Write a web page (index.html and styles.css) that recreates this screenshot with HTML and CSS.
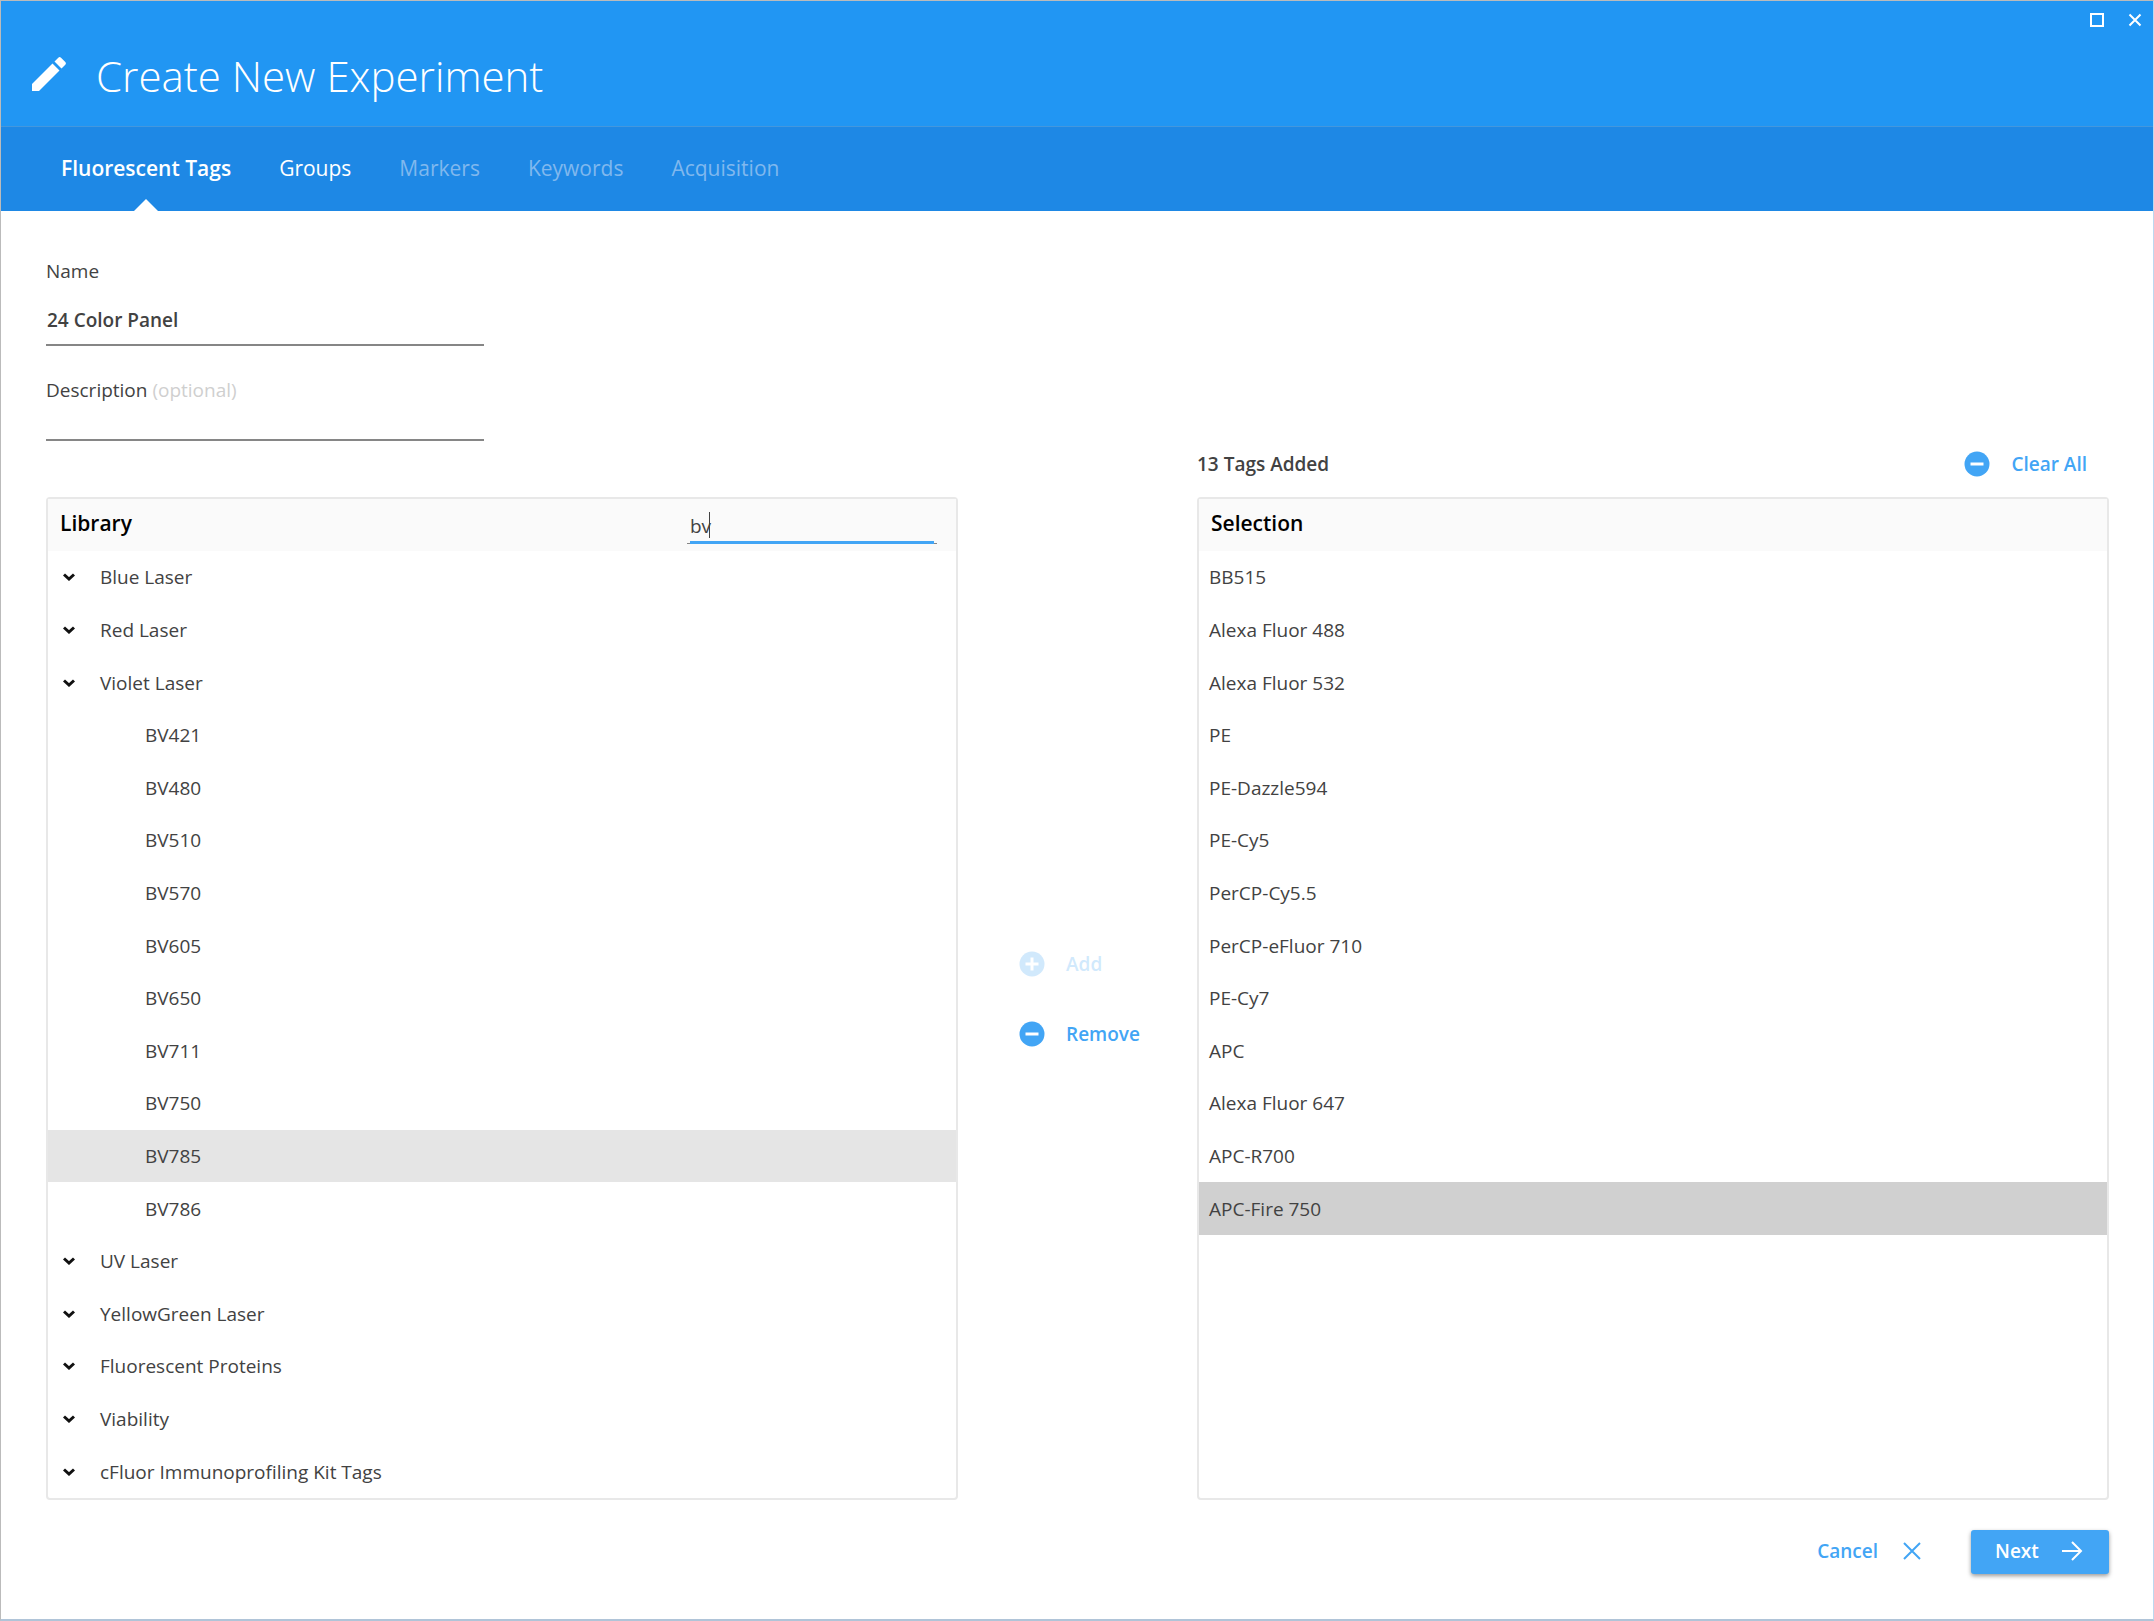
FILE: index.html
```html
<!DOCTYPE html>
<html lang="en">
    <head>
        <meta charset="utf-8">
        <title>Create New Experiment</title>
        <link rel="stylesheet" href="styles.css">
    </head>
    <body>
        <header class="title-bar">
            <svg class="pencil" viewBox="0 0 34 34" aria-hidden="true"><path d="M0 27v7h7L27.500 13.500l-7-7zM33.300 7.700a2 2 0 0 0 0-2.700L29 .7a2 2 0 0 0-2.700 0L22.500 4.500l7 7z" fill="#fff"/></svg>
            <h1>Create New Experiment</h1>
            <div class="window-buttons">
                <button type="button" aria-label="Maximize"><svg width="14" height="14" viewBox="0 0 14 14"><rect x="1" y="1" width="12" height="12"/></svg></button>
                <button type="button" aria-label="Close"><svg width="14" height="14" viewBox="0 0 14 14"><path class="thick" d="M1.500 1.500l11 11M12.500 1.500l-11 11"/></svg></button>
            </div>
        </header>
        <nav class="tabs">
            <a href="#tags" class="tab active">Fluorescent Tags</a>
            <a href="#groups" class="tab">Groups</a>
            <a href="#markers" class="tab disabled">Markers</a>
            <a href="#keywords" class="tab disabled">Keywords</a>
            <a href="#acquisition" class="tab disabled">Acquisition</a>
        </nav>

        <main>
            <div class="fields">
                <div class="field">
                    <label for="name">Name</label>
                    <input type="text" id="name" value="24 Color Panel">
                </div>
                <div class="field">
                    <label for="description">Description <span class="optional">(optional)</span></label>
                    <input type="text" id="description">
                </div>
            </div>

            <div class="selection-bar">
                <span class="count">13 Tags Added</span>
                <button type="button" class="link-btn">
                    <svg class="round" viewBox="0 0 26 26"><circle cx="13" cy="13" r="12.500"/><path d="M6.500 13h13"/></svg>
                    Clear All
                </button>
            </div>

            <section class="panel library">
                <div class="panel-head">
                    <h2>Library</h2>
                    <div class="search">
                        <input type="text" id="search" aria-label="Search library" value="bv">
                        <span class="caret"></span>
                    </div>
                </div>
                <ul class="rows">
                    <li><button type="button" class="group"><svg viewBox="0 0 12 8"><path d="M1 1.500l5 4.500 5-4.500"/></svg>Blue Laser</button></li>
                    <li><button type="button" class="group"><svg viewBox="0 0 12 8"><path d="M1 1.500l5 4.500 5-4.500"/></svg>Red Laser</button></li>
                    <li><button type="button" class="group"><svg viewBox="0 0 12 8"><path d="M1 1.500l5 4.500 5-4.500"/></svg>Violet Laser</button></li>
                    <li class="tag">BV421</li>
                    <li class="tag">BV480</li>
                    <li class="tag">BV510</li>
                    <li class="tag">BV570</li>
                    <li class="tag">BV605</li>
                    <li class="tag">BV650</li>
                    <li class="tag">BV711</li>
                    <li class="tag">BV750</li>
                    <li class="tag hovered">BV785</li>
                    <li class="tag">BV786</li>
                    <li><button type="button" class="group"><svg viewBox="0 0 12 8"><path d="M1 1.500l5 4.500 5-4.500"/></svg>UV Laser</button></li>
                    <li><button type="button" class="group"><svg viewBox="0 0 12 8"><path d="M1 1.500l5 4.500 5-4.500"/></svg>YellowGreen Laser</button></li>
                    <li><button type="button" class="group"><svg viewBox="0 0 12 8"><path d="M1 1.500l5 4.500 5-4.500"/></svg>Fluorescent Proteins</button></li>
                    <li><button type="button" class="group"><svg viewBox="0 0 12 8"><path d="M1 1.500l5 4.500 5-4.500"/></svg>Viability</button></li>
                    <li><button type="button" class="group"><svg viewBox="0 0 12 8"><path d="M1 1.500l5 4.500 5-4.500"/></svg>cFluor Immunoprofiling Kit Tags</button></li>
                </ul>
            </section>

            <div class="transfer">
                <button type="button" class="link-btn" disabled>
                    <svg class="round" viewBox="0 0 26 26"><circle cx="13" cy="13" r="12.500"/><path d="M6.500 13h13M13 6.500v13"/></svg>
                    Add
                </button>
                <button type="button" class="link-btn">
                    <svg class="round" viewBox="0 0 26 26"><circle cx="13" cy="13" r="12.500"/><path d="M6.500 13h13"/></svg>
                    Remove
                </button>
            </div>

            <section class="panel selection">
                <div class="panel-head">
                    <h2>Selection</h2>
                </div>
                <ul class="rows">
                    <li>BB515</li>
                    <li>Alexa Fluor 488</li>
                    <li>Alexa Fluor 532</li>
                    <li>PE</li>
                    <li>PE-Dazzle594</li>
                    <li>PE-Cy5</li>
                    <li>PerCP-Cy5.5</li>
                    <li>PerCP-eFluor 710</li>
                    <li>PE-Cy7</li>
                    <li>APC</li>
                    <li>Alexa Fluor 647</li>
                    <li>APC-R700</li>
                    <li class="selected">APC-Fire 750</li>
                </ul>
            </section>
        </main>

        <footer>
            <button type="button" class="link-btn cancel">
                Cancel
                <svg width="20" height="20" viewBox="0 0 20 20"><path d="M2 2l16 16M18 2L2 18"/></svg>
            </button>
            <button type="button" class="next">
                Next
                <svg width="22" height="22" viewBox="0 0 22 22"><path d="M1 11h19M11 2l9 9-9 9"/></svg>
            </button>
        </footer>
    </body>
</html>
```

FILE: styles.css
```css
*{
    box-sizing: border-box;
}
body{
    margin: 0;
    min-height: 100vh;
    display: flex;
    flex-direction: column;
    background-color: #fff;
    border: 1px solid #bbb;
    border-right-color: #bcd8f0;
    border-bottom: 2px solid #b0c4d8;
    font-family: "Open Sans", "Noto Sans", sans-serif;
    font-size: 19px;
    line-height: 26px;
    color: #424242;
}
button, input{
    font: inherit;
    color: inherit;
    border: none;
    background: none;
    padding: 0;
    margin: 0;
}
button{
    cursor: pointer;
}
svg{
    fill: none;
    flex: none;
}

/* header */
.title-bar{
    position: relative;
    display: flex;
    align-items: center;
    gap: 30px;
    height: 126px;
    padding: 24px 30px 0 31px;
    background-color: #2196f3;
    color: #fff;
    border-bottom: 1px solid #4397de;
}
.pencil{
    width: 34px;
    height: 34px;
    margin-bottom: 4px;
}
h1{
    margin: 0;
    font-size: 42px;
    line-height: 56px;
    font-weight: 300;
}
.window-buttons{
    position: absolute;
    top: 12px;
    right: 11px;
    display: flex;
    gap: 24px;
}
.window-buttons button{
    display: flex;
}
.window-buttons svg{
    stroke: #fff;
    stroke-width: 2;
}
.tabs{
    display: flex;
    align-items: stretch;
    gap: 48px;
    height: 84px;
    padding-left: 60px;
    background-color: #1e88e5;
}
.tab{
    position: relative;
    display: flex;
    align-items: center;
    padding-bottom: 2px;
    color: #fff;
    font-size: 21px;
    text-decoration: none;
}
.tab.active{
    font-weight: 600;
}
.tab.disabled{
    color: #80b8ee;
}
.tab.active::after{
    content: "";
    position: absolute;
    bottom: 0;
    left: 50%;
    margin-left: -12px;
    border: 12px solid transparent;
    border-top: none;
    border-bottom-color: #fff;
}

/* form and lists */
main{
    flex: 1;
    display: grid;
    grid-template-columns: 1fr 239px 1fr;
    grid-template-rows: auto auto 1fr;
    padding: 47px 44px 0 45px;
}
.fields{
    grid-column: 1 / 4;
    width: 438px;
}
.field{
    display: flex;
    flex-direction: column;
    height: 74px;
}
.field:first-child{
    height: 119px;
}
.field input{
    height: 26px;
    margin-top: 12px;
    padding-left: 1px;
    border-bottom: 2px solid #868686;
    font-weight: 600;
    outline: none;
}
.field:first-child input{
    height: 50px;
}
.optional{
    color: #cfcfcf;
}
.selection-bar{
    grid-column: 3;
    display: flex;
    justify-content: space-between;
    align-items: center;
    height: 26px;
    margin-bottom: 20px;
    padding-right: 22px;
}
.count{
    font-weight: 600;
}
.panel{
    display: flex;
    flex-direction: column;
    border: 2px solid #e8e8e8;
    border-radius: 4px;
}
.library{
    grid-column: 1;
}
.panel-head{
    display: flex;
    justify-content: space-between;
    align-items: center;
    height: 52px;
    padding: 0 19px 0 12px;
    background-color: #fafafa;
}
h2{
    margin: 0;
    padding-bottom: 4px;
    font-size: 21px;
    line-height: 30px;
    font-weight: 600;
    color: #000;
}
.search{
    position: relative;
    width: 250px;
    align-self: flex-end;
    margin-bottom: 7px;
    padding: 0 3px;
    background: linear-gradient(#868686, #868686) bottom / 100% 1px no-repeat;
}
.search input{
    display: block;
    width: 100%;
    height: 34px;
    border-bottom: 3px solid #42a5f5;
    outline: none;
}
.caret{
    position: absolute;
    left: 22px;
    top: 2px;
    width: 1px;
    height: 26px;
    background-color: #424242;
}
.rows{
    flex: 1;
    display: grid;
    grid-template-rows: repeat(18, 1fr);
    margin: 0;
    padding: 0;
    list-style: none;
}
.rows li{
    display: flex;
    align-items: center;
    padding-left: 10px;
}
.rows .tag{
    padding-left: 97px;
}
.group{
    display: flex;
    align-items: center;
    gap: 25px;
    padding-left: 5px;
}
.group svg{
    width: 12px;
    height: 8px;
    stroke: #111;
    stroke-width: 3;
}
.hovered{
    background-color: #e5e5e5;
}
.selected{
    background-color: #d0d0d0;
}

/* buttons */
.link-btn{
    display: flex;
    align-items: center;
    gap: 21px;
    font-weight: 600;
    color: #42a5f5;
}
.link-btn:disabled{
    opacity: 0.24;
}
.round{
    width: 26px;
    height: 26px;
}
.round circle{
    fill: #42a5f5;
}
.round path{
    stroke: #fff;
    stroke-width: 3;
}
.transfer{
    display: flex;
    flex-direction: column;
    justify-content: center;
    gap: 44px;
    padding-left: 61px;
}
footer{
    display: flex;
    justify-content: flex-end;
    align-items: center;
    gap: 49px;
    padding: 30px 44px 45px;
}
.cancel{
    gap: 24px;
    padding-bottom: 2px;
}
.cancel svg{
    stroke: #42a5f5;
    stroke-width: 2;
}
.next{
    display: flex;
    align-items: center;
    justify-content: space-between;
    width: 138px;
    height: 44px;
    padding: 0 26px 2px 24px;
    border-radius: 3px;
    background-color: #42a5f5;
    box-shadow: 0 2px 4px rgba(0, 0, 0, 0.4);
    color: #fff;
    font-weight: 600;
}
.next svg{
    stroke: #fff;
    stroke-width: 2;
}
```
